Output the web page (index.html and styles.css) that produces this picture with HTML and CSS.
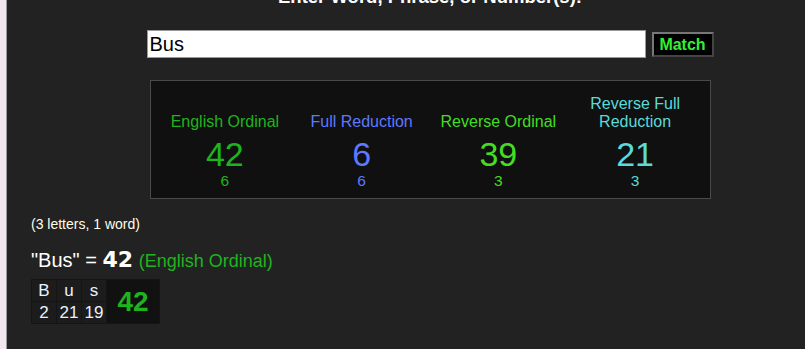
FILE: index.html
```html
<!DOCTYPE html>
<html>
    <head lang="en">
        <meta charset="UTF-8">
        <title>Gematria</title>
        <link rel="stylesheet" href="styles.css">
    </head>
    <body>
        <div id="page">
            <div id="search">
                <h1>Enter Word, Phrase, or Number(s):</h1>
                <div id="form">
                    <input type="text" value="Bus">
                    <button>Match</button>
                </div>
                <div id="ciphers">
                    <div class="cipher eo">
                        <span class="name">English Ordinal</span>
                        <span class="value">42</span>
                        <span class="sub">6</span>
                    </div>
                    <div class="cipher fr">
                        <span class="name">Full Reduction</span>
                        <span class="value">6</span>
                        <span class="sub">6</span>
                    </div>
                    <div class="cipher ro">
                        <span class="name">Reverse Ordinal</span>
                        <span class="value">39</span>
                        <span class="sub">3</span>
                    </div>
                    <div class="cipher rfr">
                        <span class="name">Reverse Full<br>Reduction</span>
                        <span class="value">21</span>
                        <span class="sub">3</span>
                    </div>
                </div>
            </div>
            <div id="detail">
                <p class="count">(3 letters, 1 word)</p>
                <p class="sum">"Bus" = <b>42</b> <span>(English Ordinal)</span></p>
                <table id="breakdown">
                    <tr>
                        <td>B</td><td>u</td><td>s</td>
                        <td class="total" rowspan="2">42</td>
                    </tr>
                    <tr>
                        <td>2</td><td>21</td><td>19</td>
                    </tr>
                </table>
            </div>
        </div>
    </body>
</html>
```

FILE: styles.css
```css
 *{
     margin: 0;
     padding: 0;
 }
 body{
     background: #efe6ef;
     font-family: "Liberation Sans", Arial, sans-serif;
 }
 #page{
     margin-left: 6px;
     border-left: 1px solid #9a9a9a;
     background: #222222;
     min-height: 349px;
     overflow: hidden;
 }
 #search{
     padding-left: 48px;
     display: flex;
     flex-direction: column;
     align-items: center;
 }
 h1{
     margin-top: -13px;
     font-size: 18.5px;
     line-height: 20px;
     color: #ffffff;
 }
 #form{
     margin-top: 23px;
     display: flex;
     align-items: center;
     gap: 6px;
 }
 #form input{
     width: 499px;
     height: 28px;
     box-sizing: border-box;
     border: 1px solid #999;
     padding: 0 2px;
     font-family: "Liberation Sans", Arial, sans-serif;
     font-size: 20px;
     color: #000;
 }
 #form button{
     width: 62px;
     height: 25px;
     box-sizing: border-box;
     border: 2px solid;
     border-color: #777 #444 #444 #777;
     background: #000;
     color: #33ee33;
     font-family: "Liberation Sans", Arial, sans-serif;
     font-weight: bold;
     font-size: 16px;
     margin-top: 1px;
 }
 #ciphers{
     margin-top: 22px;
     width: 561px;
     height: 119px;
     box-sizing: border-box;
     border: 1px solid #4a4a4a;
     background: #101010;
     display: grid;
     grid-template-columns: repeat(4, 1fr);
     padding: 14px 6px 0;
 }
 .cipher{
     display: flex;
     flex-direction: column;
     align-items: center;
     text-align: center;
 }
 .cipher .name{
     height: 36px;
     display: flex;
     align-items: flex-end;
     font-size: 16px;
     line-height: 18px;
 }
 .cipher .value{
     font-size: 34px;
     line-height: 36px;
     margin-top: 5px;
 }
 .cipher .sub{
     font-size: 15.5px;
     line-height: 18px;
 }
 .eo{ color: #1db51d; }
 .fr{ color: #5e78ff; }
 .ro{ color: #44dd22; }
 .rfr{ color: #5adada; }
 #detail{
     padding-left: 24px;
 }
 .count{
     margin-top: 17px;
     font-size: 14px;
     line-height: 16px;
     color: #fffde8;
 }
 .sum{
     margin-top: 16px;
     font-size: 20px;
     line-height: 24px;
     color: #ffffff;
 }
 .sum b{
     font-family: "DejaVu Sans", sans-serif;
     font-size: 22px;
 }
 .sum span{
     font-size: 18px;
     color: #1db51d;
 }
 #breakdown{
     margin-top: 6px;
     border-collapse: collapse;
     background: #1c1c1c;
 }
 #breakdown td{
     border: 1px solid #151515;
     width: 24px;
     height: 21px;
     text-align: center;
     font-size: 17px;
     color: #e8f2ff;
     padding: 0;
 }
 #breakdown td.total{
     width: 52px;
     background: #111;
     color: #1db51d;
     font-weight: bold;
     font-size: 28px;
 }
```
